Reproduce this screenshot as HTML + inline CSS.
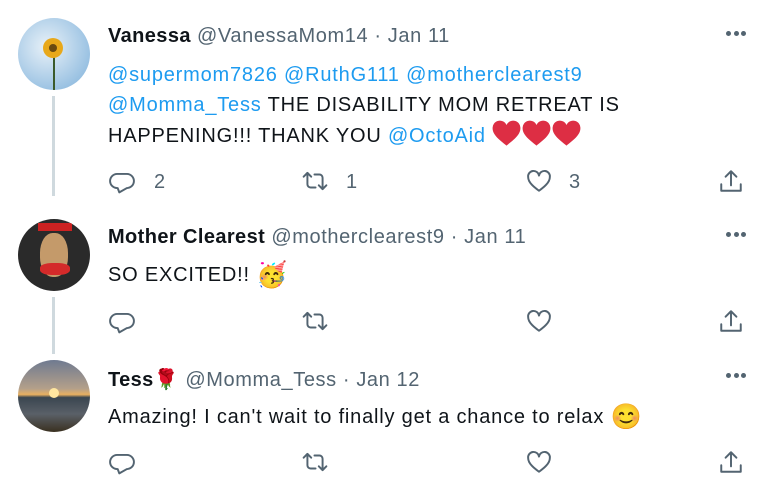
<!DOCTYPE html><html><head><style>
body{margin:0;width:768px;height:495px;background:#fff;font-family:"Liberation Sans","Noto Sans CJK JP",sans-serif;color:#0f1419;position:relative;overflow:hidden}
.a{position:absolute}
.av{position:absolute;left:18px;width:72px;height:72px;border-radius:50%;overflow:hidden}
.ln{position:absolute;left:52px;width:3px;background:#cfd9de}
.hd{position:absolute;left:108px;font-size:20px;letter-spacing:0.6px;white-space:nowrap;color:#536471}
.hd b{color:#0f1419;letter-spacing:0.4px}
.tx{position:absolute;left:108px;font-size:20px;letter-spacing:0.8px;line-height:30px;white-space:nowrap}
.bl{color:#1d9bf0}
.num{position:absolute;font-size:20px;color:#536471}
.dots{position:absolute;left:726px;width:30px;height:5px}
.dots i{float:left;width:5px;height:5px;border-radius:50%;background:#536471;margin-right:2.5px}
.em{font-size:25px;letter-spacing:1px;vertical-align:-2px}
svg.h{width:29px;height:27px;vertical-align:-5px;margin-right:1px}
svg.i{position:absolute;width:26px;height:26px;fill:none;stroke:#536471;stroke-width:1.8;stroke-linejoin:round;stroke-linecap:round}
</style></head><body>
<div class="av" style="top:18px;background:radial-gradient(circle at 40% 40%,#e8f1f8,#9cc3e3 70%,#7fb0d8)"><div class="a" style="left:35px;top:30px;width:2px;height:42px;background:#3a5a2a"></div><div class="a" style="left:25px;top:20px;width:20px;height:20px;border-radius:50%;background:#e8a81a"></div><div class="a" style="left:31px;top:26px;width:8px;height:8px;border-radius:50%;background:#6a4a10"></div></div>
<div class="ln" style="top:96px;height:100px"></div>
<div class="av" style="top:219px;background:#2a2a2a"><div class="a" style="left:22px;top:14px;width:28px;height:44px;border-radius:45%;background:#c49a6a"></div><div class="a" style="left:22px;top:44px;width:30px;height:12px;border-radius:40%;background:#d42a2a"></div><div class="a" style="left:20px;top:4px;width:34px;height:8px;background:#c22"></div></div>
<div class="ln" style="top:297px;height:57px"></div>
<div class="av" style="top:360px;background:linear-gradient(#6f7a90 0%,#b4a08a 40%,#e8b060 48%,#3a4650 52%,#5a6068 75%,#3a3020 100%)"><div class="a" style="left:31px;top:28px;width:10px;height:10px;border-radius:50%;background:#ffe6a0"></div></div>

<div class="hd" style="top:25px"><b>Vanessa</b> @VanessaMom14 · Jan 11</div>
<div class="dots" style="top:31px"><i></i><i></i><i></i></div>
<div class="tx" style="top:60px"><span class="bl">@supermom7826 @RuthG111 @motherclearest9</span><br><span class="bl">@Momma_Tess</span> THE DISABILITY MOM RETREAT IS<br>HAPPENING!!! THANK YOU <span class="bl">@OctoAid</span> <svg class="h" viewBox="0 0 24 22"><path fill="#dd2e44" d="M12 21C7 17 0.5 12.5 0.5 6.8A6 6 0 0112 4a6 6 0 0111.5 2.8C23.5 12.5 17 17 12 21z"/></svg><svg class="h" viewBox="0 0 24 22"><path fill="#dd2e44" d="M12 21C7 17 0.5 12.5 0.5 6.8A6 6 0 0112 4a6 6 0 0111.5 2.8C23.5 12.5 17 17 12 21z"/></svg><svg class="h" viewBox="0 0 24 22"><path fill="#dd2e44" d="M12 21C7 17 0.5 12.5 0.5 6.8A6 6 0 0112 4a6 6 0 0111.5 2.8C23.5 12.5 17 17 12 21z"/></svg></div>

<div class="hd" style="top:226px"><b>Mother Clearest</b> @motherclearest9 · Jan 11</div>
<div class="dots" style="top:232px"><i></i><i></i><i></i></div>
<div class="tx" style="top:260px">SO EXCITED!! <span class="em">🥳</span></div>

<div class="hd" style="top:367px"><b>Tess</b><span style="color:#c0162a">🌹</span> @Momma_Tess · Jan 12</div>
<div class="dots" style="top:373px"><i></i><i></i><i></i></div>
<div class="tx" style="top:402px">Amazing! I can't wait to finally get a chance to relax <span class="em">😊</span></div>

<div id="r"></div>
<script>
var ys=[168,308,449];var h='';
ys.forEach(function(y){
h+='<svg class="i" style="left:109px;top:'+y+'px" viewBox="0 0 24 24"><path d="M8 18.5H7.5a6.5 6.5 0 010-13h9a6.5 6.5 0 010 13L9.5 22.5z"/></svg>';
h+='<svg class="i" style="left:302px;top:'+y+'px" viewBox="0 0 24 24"><path d="M1.5 8l3.5-3.5L8.5 8M5 4.5V15a3 3 0 003 3h4.5M22.5 16L19 19.5 15.5 16M19 19.5V9a3 3 0 00-3-3h-4.5"/></svg>';
h+='<svg class="i" style="left:526px;top:'+y+'px" viewBox="0 0 24 24"><path d="M12 21C8 18 2 13.5 2 8.5a5 5 0 0110-1.5 5 5 0 0110 1.5C22 13.5 16 18 12 21z"/></svg>';
h+='<svg class="i" style="left:718px;top:'+y+'px" viewBox="0 0 24 24"><path d="M12 3v13M7 8l5-5 5 5M3 15v6h18v-6"/></svg>';
});
h+='<div class="num" style="left:154px;top:171px">2</div><div class="num" style="left:346px;top:171px">1</div><div class="num" style="left:569px;top:171px">3</div>';
document.getElementById('r').innerHTML=h;
</script>
</body></html>
